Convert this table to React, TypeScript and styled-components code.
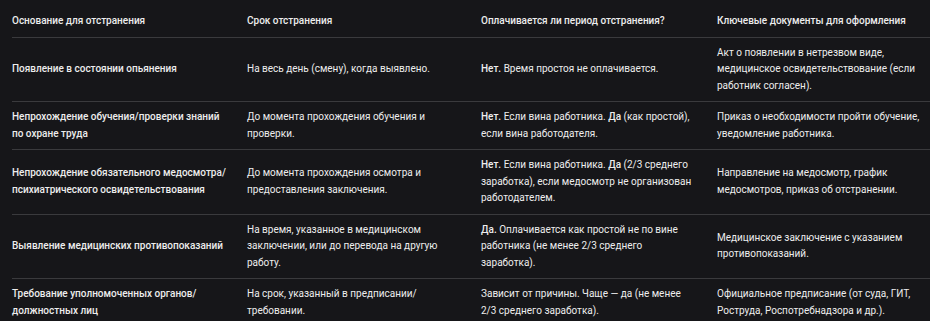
import React from 'react';
import styled, { createGlobalStyle } from 'styled-components';

const GlobalStyle = createGlobalStyle`
  html, body {
    margin: 0;
    padding: 0;
    background: #161619;
  }
  body {
    font-family: Roboto, "Noto Sans", Arial, sans-serif;
    color: #ededed;
    overflow: hidden;
  }
`;

const Wrapper = styled.div`
  padding: 6px 0 0 12px;
`;

const Table = styled.table`
  border-collapse: collapse;
  table-layout: fixed;
  width: 940px;
  font-size: 10px;
  line-height: 16.5px;
`;

const HeadCell = styled.th`
  text-align: left;
  font-weight: 500;
  padding: 7px 20px 7px 0;
  border-bottom: 1px solid #3a3a3d;
  vertical-align: middle;
`;

const Row = styled.tr`
  border-bottom: 1px solid #3a3a3d;
`;

const Cell = styled.td<{ $strong?: boolean }>`
  padding: 7px 20px 7px 0;
  vertical-align: middle;
  font-weight: ${(p) => (p.$strong ? 500 : 400)};
`;

const Mark = styled.b`
  font-weight: 500;
`;

type Item = {
  reason: React.ReactNode;
  term: React.ReactNode;
  paid: React.ReactNode;
  docs: React.ReactNode;
};

const rows: Item[] = [
  {
    reason: 'Появление в состоянии опьянения',
    term: 'На весь день (смену), когда выявлено.',
    paid: (
      <>
        <Mark>Нет.</Mark> Время простоя не оплачивается.
      </>
    ),
    docs: 'Акт о появлении в нетрезвом виде, медицинское освидетельствование (если работник согласен).',
  },
  {
    reason: 'Непрохождение обучения/проверки знаний по охране труда',
    term: 'До момента прохождения обучения и проверки.',
    paid: (
      <>
        <Mark>Нет.</Mark> Если вина работника. <Mark>Да</Mark> (как простой), если вина работодателя.
      </>
    ),
    docs: 'Приказ о необходимости пройти обучение, уведомление работника.',
  },
  {
    reason: (
      <>
        Непрохождение обязательного медосмотра/<wbr />психиатрического освидетельствования
      </>
    ),
    term: 'До момента прохождения осмотра и предоставления заключения.',
    paid: (
      <>
        <Mark>Нет.</Mark> Если вина работника. <Mark>Да</Mark> (2/3 среднего заработка), если медосмотр не
        организован работодателем.
      </>
    ),
    docs: 'Направление на медосмотр, график медосмотров, приказ об отстранении.',
  },
  {
    reason: 'Выявление медицинских противопоказаний',
    term: 'На время, указанное в медицинском заключении, или до перевода на другую работу.',
    paid: (
      <>
        <Mark>Да.</Mark> Оплачивается как простой не по вине работника (не менее 2/3 среднего заработка).
      </>
    ),
    docs: 'Медицинское заключение с указанием противопоказаний.',
  },
  {
    reason: (
      <>
        Требование уполномоченных органов/<wbr />должностных лиц
      </>
    ),
    term: (
      <>
        На срок, указанный в предписании/<wbr />требовании.
      </>
    ),
    paid: 'Зависит от причины. Чаще — да (не менее 2/3 среднего заработка).',
    docs: 'Официальное предписание (от суда, ГИТ, Роструда, Роспотребнадзора и др.).',
  },
];

export default function App() {
  return (
    <>
      <GlobalStyle />
      <Wrapper>
        <Table>
          <colgroup>
            <col style={{ width: 235 }} />
            <col style={{ width: 234 }} />
            <col style={{ width: 236 }} />
            <col style={{ width: 235 }} />
          </colgroup>
          <thead>
            <tr>
              <HeadCell>Основание для отстранения</HeadCell>
              <HeadCell>Срок отстранения</HeadCell>
              <HeadCell>Оплачивается ли период отстранения?</HeadCell>
              <HeadCell>Ключевые документы для оформления</HeadCell>
            </tr>
          </thead>
          <tbody>
            {rows.map((r, i) => (
              <Row key={i}>
                <Cell $strong>{r.reason}</Cell>
                <Cell>{r.term}</Cell>
                <Cell>{r.paid}</Cell>
                <Cell>{r.docs}</Cell>
              </Row>
            ))}
          </tbody>
        </Table>
      </Wrapper>
    </>
  );
}
